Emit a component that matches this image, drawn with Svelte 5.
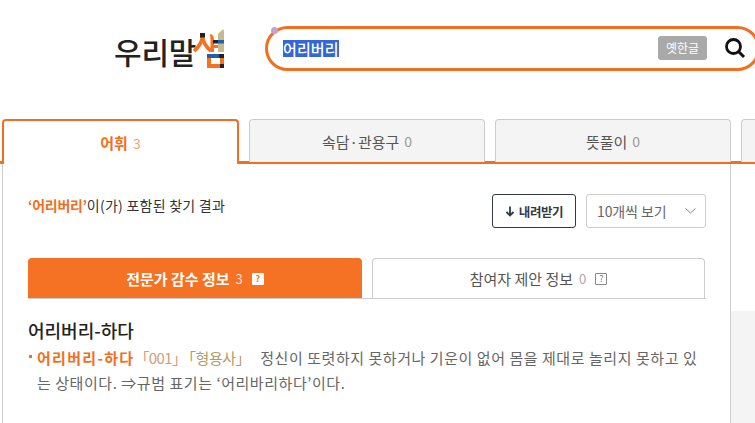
<script>
    const tabs = [
        { label: "어휘", count: 3, active: true },
        { label: "속담·관용구", count: 0 },
        { label: "뜻풀이", count: 0 },
    ];
</script>

<div class="page">
    <header class="top">
        <div class="logo">
            <span class="logo-text">우리말</span>
            <svg class="logo-mark" width="33" height="41" viewBox="0 0 33 41">
                <path d="M9.5 8 C9 14 6 19 1 23 M9.5 8 C10 14 13 19 18 23" stroke="#f47321" stroke-width="3.6" fill="none"/>
                <rect x="7" y="5" width="5" height="4.5" fill="#222"/>
                <path d="M25 6 L30 1 L31 3 V24 H25 Z" fill="#c9b88a"/>
                <rect x="25" y="12" width="6" height="3.5" fill="#1c62ac"/>
                <path d="M17 6 C20 6 21 9 21 12 V24 H17.5 V11 Z" fill="#f47321"/>
                <rect x="20" y="12" width="5" height="3.5" fill="#222"/>
                <rect x="20" y="17" width="5" height="3" fill="#f47321"/>
                <rect x="14" y="26" width="12" height="4" fill="#1c62ac"/>
                <rect x="26" y="26" width="5" height="4" fill="#222"/>
                <rect x="14" y="30" width="4" height="10" fill="#f47321"/>
                <rect x="27" y="30" width="4" height="7" fill="#f47321"/>
                <rect x="18" y="36" width="9" height="4" fill="#f47321"/>
                <rect x="27" y="36" width="4" height="4" fill="#222"/>
            </svg>
        </div>
        <div class="search">
            <span class="query">어리버리</span>
            <span class="old-hangul">옛한글</span>
            <svg class="magnifier" width="22" height="22" viewBox="0 0 22 22">
                <circle cx="9.5" cy="9.5" r="7" fill="none" stroke="#111" stroke-width="2.8"/>
                <path d="M14.5 14.5 L20 20" stroke="#111" stroke-width="3"/>
            </svg>
        </div>
    </header>

    <nav class="tabs">
        {#each tabs as tab}
            <div class="tab" class:active={tab.active}>
                <span class="tab-label">{tab.label}</span>
                <span class="tab-count">{tab.count}</span>
            </div>
        {/each}
        <div class="tab stub"></div>
    </nav>

    <div class="body">
        <main class="panel">
            <div class="result-bar">
                <p class="result"><b>‘어리버리’</b>이(가) 포함된 찾기 결과</p>
                <div class="actions">
                    <button class="download">
                        <svg width="10" height="11" viewBox="0 0 10 11">
                            <path d="M5 0.5 V9.5 M1.5 6 L5 9.5 L8.5 6" fill="none" stroke="#333a45" stroke-width="1.8"/>
                        </svg>
                        내려받기
                    </button>
                    <div class="select">
                        <span>10개씩 보기</span>
                        <svg width="11" height="6" viewBox="0 0 11 6">
                            <path d="M0.5 0.5 L5.5 5 L10.5 0.5" fill="none" stroke="#888" stroke-width="1"/>
                        </svg>
                    </div>
                </div>
            </div>

            <div class="subtabs">
                <div class="subtab on">
                    <span class="subtab-label">전문가 감수 정보</span>
                    <span class="subtab-count">3</span>
                    <span class="help">?</span>
                </div>
                <div class="subtab">
                    <span class="subtab-label">참여자 제안 정보</span>
                    <span class="subtab-count">0</span>
                    <span class="help">?</span>
                </div>
            </div>

            <article class="entry">
                <h2>어리버리-하다</h2>
                <p class="sense">
                    <b>어리버리-하다</b><span class="code">「001」</span><span class="pos">「형용사」</span>
                    정신이 또렷하지 못하거나 기운이 없어 몸을 제대로 놀리지 못하고 있는 상태이다. ⇒규범 표기는 ‘어리바리하다’이다.
                </p>
            </article>
        </main>
        <aside class="side"></aside>
    </div>
</div>

<style>
    :global(body) {
        margin: 0;
        background: #fff;
        overflow: hidden;
    }

    .page {
        width: 755px;
        height: 423px;
        overflow: hidden;
        font-family: "Noto Sans CJK KR", "Noto Sans", sans-serif;
        color: #333;
    }

    /* header */
    .top {
        display: flex;
        align-items: center;
        height: 119px;
        box-sizing: border-box;
        padding: 0 0 23px 114px;
    }

    .logo {
        display: flex;
        align-items: center;
        flex: none;
        width: 112px;
        margin-right: 39px;
        height: 50px;
    }

    .logo-text {
        flex: none;
        width: 79px;
        font-size: 30px;
        font-weight: 500;
        letter-spacing: -0.2px;
        white-space: nowrap;
        color: #222;
        margin-top: 5px;
    }

    .logo-mark {
        flex: none;
    }

    .search {
        position: relative;
        display: flex;
        align-items: center;
        flex: none;
        width: 495px;
        height: 45px;
        box-sizing: border-box;
        border: 3px solid #f26f21;
        border-radius: 23px;
        padding: 0 11px 0 15px;
    }

    .search::before {
        content: "";
        position: absolute;
        left: 3px;
        top: -2px;
        width: 7px;
        height: 7px;
        border-radius: 50%;
        background: #c3a2d2;
    }

    .query {
        background: #3367d6;
        color: #fff;
        font-size: 15px;
        font-weight: 500;
        line-height: 17px;
        letter-spacing: 0.1px;
    }

    .old-hangul {
        margin-left: auto;
        background: #a9a9a9;
        color: #fff;
        border-radius: 3px;
        font-size: 12px;
        line-height: 24px;
        padding: 0 8px;
    }

    .magnifier {
        margin-left: 17px;
    }

    /* main tabs */
    .tabs {
        display: flex;
        gap: 10px;
        padding-left: 2px;
        height: 45px;
        box-sizing: border-box;
        border-bottom: 3px solid #f26f21;
    }

    .tab {
        flex: none;
        width: 236px;
        height: 43px;
        box-sizing: border-box;
        display: flex;
        align-items: center;
        justify-content: center;
        gap: 5px;
        background: #f4f4f4;
        border: 1px solid #ccc;
        border-bottom: 0;
        border-radius: 4px 4px 0 0;
        font-size: 15px;
        color: #555;
    }

    .tab.active {
        width: 237px;
        height: 45px;
        background: #fff;
        border: 2px solid #f26f21;
        border-bottom: 0;
        color: #f26f21;
        font-weight: 700;
    }

    .tab.stub {
        width: 30px;
    }

    .tab-count {
        color: #999;
        font-weight: 400;
        font-size: 14px;
    }

    .active .tab-count {
        color: #f7a167;
    }

    /* body */
    .body {
        display: flex;
        align-items: flex-start;
    }

    .panel {
        width: 729px;
        margin-left: 2px;
        flex: none;
        box-sizing: border-box;
        height: 260px;
        border-left: 1px solid #ccc;
        border-right: 1px solid #ccc;
        padding: 30px 24px 0 25px;
    }

    .side {
        flex: 1;
        height: 113px;
        margin-top: 147px;
        background: #f4f4f4;
    }

    .result-bar {
        display: flex;
        justify-content: space-between;
        align-items: flex-start;
    }

    .result {
        margin: 0;
        font-size: 14px;
        line-height: 22px;
        letter-spacing: 0.25px;
        color: #333;
    }

    .result b {
        color: #f26f21;
        font-weight: 700;
        letter-spacing: -0.3px;
    }

    .actions {
        display: flex;
        gap: 10px;
    }

    .download {
        display: flex;
        align-items: center;
        justify-content: center;
        gap: 4px;
        width: 84px;
        height: 34px;
        padding: 0;
        background: #fff;
        border: 1px solid #333a45;
        border-radius: 3px;
        font: 700 12.5px "Noto Sans CJK KR", sans-serif;
        letter-spacing: -0.4px;
        color: #333a45;
    }

    .select {
        display: flex;
        align-items: center;
        justify-content: space-between;
        width: 120px;
        height: 34px;
        box-sizing: border-box;
        padding: 0 9px 0 10px;
        border: 1px solid #ccc;
        border-radius: 3px;
        font-size: 14px;
        letter-spacing: -0.1px;
        color: #666;
    }

    /* sub tabs */
    .subtabs {
        display: flex;
        gap: 10px;
        margin-top: 30px;
        border-bottom: 1px solid #ccc;
        height: 40px;
    }

    .subtab {
        flex: none;
        width: 333px;
        height: 40px;
        box-sizing: border-box;
        display: flex;
        align-items: center;
        justify-content: center;
        gap: 6px;
        border: 1px solid #ccc;
        border-bottom: 0;
        border-radius: 4px 4px 0 0;
        font-size: 15px;
        color: #555;
    }

    .subtab.on {
        width: 334px;
        background: #f57224;
        border-color: #f57224;
        color: #fff;
    }

    .subtab.on .subtab-label {
        font-weight: 700;
    }

    .subtab-count {
        font-size: 13px;
        color: #aaa;
    }

    .on .subtab-count {
        color: #fdd;
    }

    .help {
        width: 12px;
        height: 12px;
        box-sizing: border-box;
        margin-left: 3px;
        display: flex;
        align-items: center;
        justify-content: center;
        border: 1px solid #888;
        border-radius: 1px;
        font-size: 9px;
        color: #777;
    }

    .on .help {
        background: #fff;
        border-color: #fff;
        color: #f57224;
        font-weight: 700;
    }

    /* entry */
    .entry {
        padding-top: 19px;
    }

    h2 {
        margin: 0;
        font-size: 18px;
        font-weight: 500;
        line-height: 25px;
        color: #222;
    }

    .sense {
        position: relative;
        margin: 2px 0 0;
        padding-left: 9px;
        font-size: 15px;
        line-height: 25px;
        letter-spacing: 0.55px;
        color: #666;
    }

    .sense::before {
        content: "";
        position: absolute;
        left: 1px;
        top: 10px;
        width: 3px;
        height: 3px;
        background: #f26f21;
    }

    .sense b {
        color: #f26f21;
        font-weight: 700;
        letter-spacing: 1.3px;
    }

    .code {
        color: #d79a76;
        letter-spacing: -0.6px;
    }

    .pos {
        color: #b39b5e;
        letter-spacing: -0.4px;
        margin-left: 2px;
        margin-right: 6px;
    }
</style>
